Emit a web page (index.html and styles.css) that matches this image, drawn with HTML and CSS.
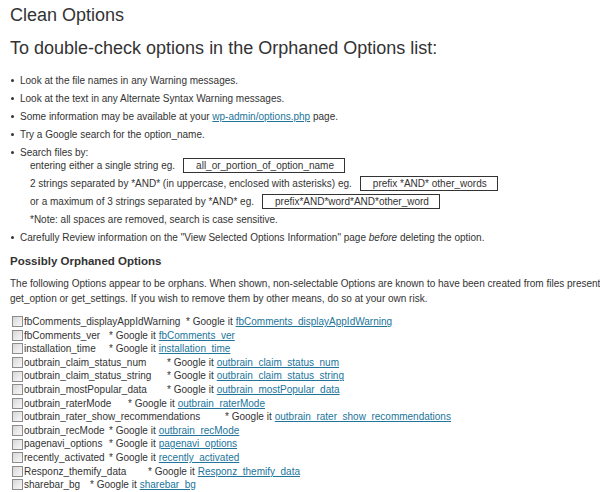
FILE: index.html
```html
<!DOCTYPE html>
<html>
<head>
<meta charset="utf-8">
<link rel="stylesheet" href="styles.css">
</head>
<body>
<div class="wrap">
  <h1 class="title">Clean Options</h1>
  <h2 class="subtitle">To double-check options in the Orphaned Options list:</h2>
  <ul class="tips">
    <li>Look at the file names in any Warning messages.</li>
    <li>Look at the text in any Alternate Syntax Warning messages.</li>
    <li>Some information may be available at your <a href="#">wp-admin/options.php</a> page.</li>
    <li>Try a Google search for the option_name.</li>
    <li>Search files by:
      <div class="sub">entering either a single string eg.<span class="box">all_or_portion_of_option_name</span></div>
      <div class="sub">2 strings separated by *AND* (in uppercase, enclosed with asterisks) eg.<span class="box">prefix *AND* other_words</span></div>
      <div class="sub">or a maximum of 3 strings separated by *AND* eg.<span class="box">prefix*AND*word*AND*other_word</span></div>
      <div class="sub">*Note: all spaces are removed, search is case sensitive.</div>
    </li>
    <li>Carefully Review information on the "View Selected Options Information" page <em>before</em> deleting the option.</li>
  </ul>
  <h3 class="section">Possibly Orphaned Options</h3>
  <p class="intro"><span class="line">The following Options appear to be orphans. When shown, non-selectable Options are known to have been created from files present</span><span class="line">get_option or get_settings. If you wish to remove them by other means, do so at your own risk.</span></p>
  <div class="options">
    <div class="row"><span class="cb"></span><span class="name" style="width:162px">fbComments_displayAppIdWarning</span>* Google it <a href="#">fbComments_displayAppIdWarning</a></div>
    <div class="row"><span class="cb"></span><span class="name" style="width:85px">fbComments_ver</span>* Google it <a href="#">fbComments_ver</a></div>
    <div class="row"><span class="cb"></span><span class="name" style="width:85px">installation_time</span>* Google it <a href="#">installation_time</a></div>
    <div class="row"><span class="cb"></span><span class="name" style="width:143px">outbrain_claim_status_num</span>* Google it <a href="#">outbrain_claim_status_num</a></div>
    <div class="row"><span class="cb"></span><span class="name" style="width:143px">outbrain_claim_status_string</span>* Google it <a href="#">outbrain_claim_status_string</a></div>
    <div class="row"><span class="cb"></span><span class="name" style="width:143px">outbrain_mostPopular_data</span>* Google it <a href="#">outbrain_mostPopular_data</a></div>
    <div class="row"><span class="cb"></span><span class="name" style="width:104px">outbrain_raterMode</span>* Google it <a href="#">outbrain_raterMode</a></div>
    <div class="row"><span class="cb"></span><span class="name" style="width:201px">outbrain_rater_show_recommendations</span>* Google it <a href="#">outbrain_rater_show_recommendations</a></div>
    <div class="row"><span class="cb"></span><span class="name" style="width:85px">outbrain_recMode</span>* Google it <a href="#">outbrain_recMode</a></div>
    <div class="row"><span class="cb"></span><span class="name" style="width:85px">pagenavi_options</span>* Google it <a href="#">pagenavi_options</a></div>
    <div class="row"><span class="cb"></span><span class="name" style="width:85px">recently_activated</span>* Google it <a href="#">recently_activated</a></div>
    <div class="row"><span class="cb"></span><span class="name" style="width:124px">Responz_themify_data</span>* Google it <a href="#">Responz_themify_data</a></div>
    <div class="row"><span class="cb"></span><span class="name" style="width:66px">sharebar_bg</span>* Google it <a href="#">sharebar_bg</a></div>
  </div>
</div>
</body>
</html>
```

FILE: styles.css
```css
html, body {
  margin: 0;
  padding: 0;
  background: #fff;
}
body {
  font-family: "Liberation Sans", Arial, sans-serif;
  color: #333;
  font-size: 10px;
}
.wrap {
  padding-left: 10px;
  overflow: hidden;
}
a {
  color: #21759b;
  text-decoration: underline;
}
.title {
  margin: 0;
  padding-top: 4px;
  font-size: 18px;
  line-height: 22px;
  font-weight: normal;
  color: #333;
}
.subtitle {
  margin: 11px 0 0;
  font-size: 18px;
  line-height: 22px;
  font-weight: normal;
  color: #333;
}
.tips {
  margin: 16px 0 0;
  padding-left: 10px;
  list-style: none;
}
.tips li {
  font-size: 10px;
  line-height: 12px;
  margin-bottom: 6px;
}
.tips li::before {
  content: "";
  display: inline-block;
  width: 3px;
  height: 3px;
  border-radius: 50%;
  background: #333;
  margin-left: -9px;
  margin-right: 6px;
  vertical-align: 2px;
}
.sub {
  margin-left: 10px;
}
.sub:first-of-type {
  margin-top: 1px;
}
.sub + .sub {
  margin-top: 6px;
}
.box {
  border: 1px solid #333;
  padding: 1px 10px 1px 12px;
  margin-left: 8px;
}
.section {
  margin: 10px 0 0;
  font-size: 11.5px;
  line-height: 14px;
  font-weight: bold;
  color: #333;
}
.intro {
  margin: 8px 0 0;
  line-height: 15px;
}
.intro .line {
  display: block;
  white-space: nowrap;
}
.options {
  margin-top: 9px;
}
.row {
  display: flex;
  align-items: center;
  height: 13.6px;
  line-height: 13.6px;
  white-space: nowrap;
  padding-left: 2px;
}
.row a {
  margin-left: 3px;
}
.cb {
  box-sizing: border-box;
  width: 11px;
  height: 11px;
  border: 1px solid #8d8d8d;
  background: linear-gradient(135deg, #d6d6d6 0%, #ececec 60%, #f7f7f7 100%);
  margin-right: 1px;
  flex: none;
}
.name {
  display: inline-block;
  flex: none;
}
```
